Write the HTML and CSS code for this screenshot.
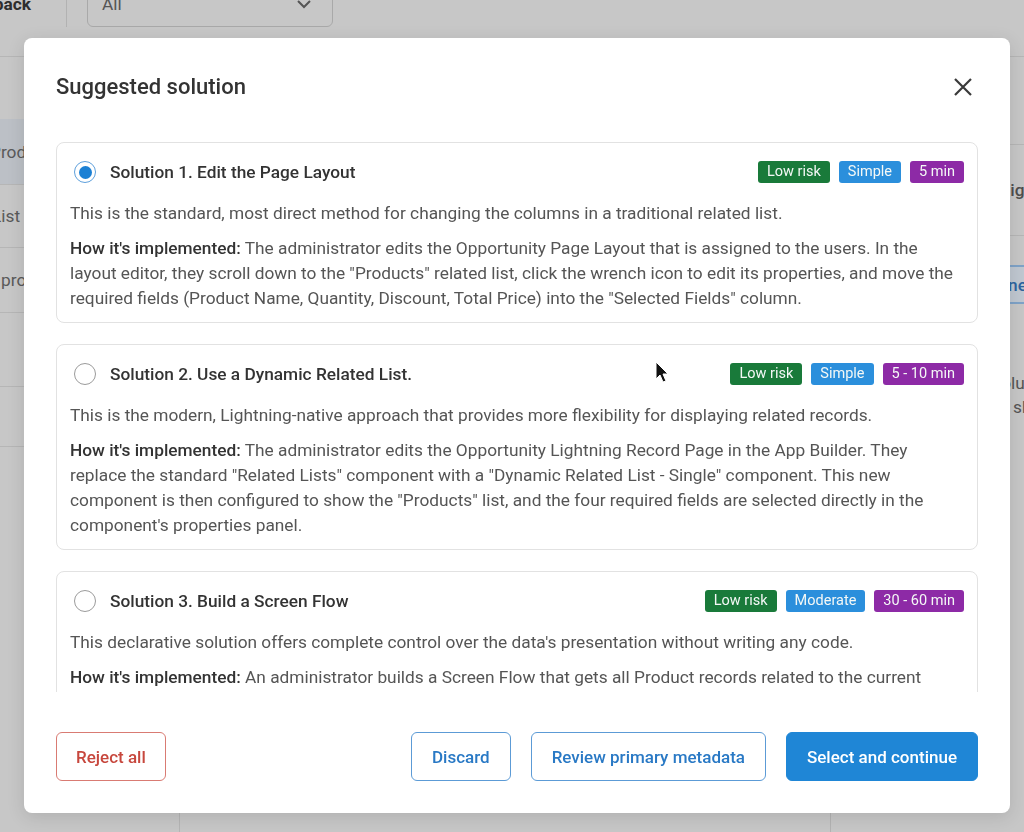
FILE: index.html
```html
<!DOCTYPE html>
<html lang="en">
<head>
	<meta charset="UTF-8">
	<title>Suggested solution</title>
	<link rel="stylesheet" href="styles.css">
</head>
<body>
	<div class="page">
		<div class="topbar">
			<div class="topbar-row">
				<span class="topbar-title">Feedback</span>
				<span class="divider"></span>
				<div class="select">
					<span>All</span>
					<svg width="16" height="10" viewBox="0 0 16 10"><path d="M2 2l6 6 6-6" fill="none" stroke="#555" stroke-width="2"/></svg>
				</div>
			</div>
		</div>
		<div class="page-body">
			<ul class="side-left">
				<li class="row-a"></li>
				<li class="row-b"></li>
				<li class="row-c active"><span class="cut">Products</span></li>
				<li class="row-c"><span class="cut-l">List view</span></li>
				<li class="row-d">products</li>
				<li class="row-e"></li>
				<li class="row-f"></li>
			</ul>
			<div class="main"></div>
			<div class="side-right">
				<div class="r-row r-a"></div>
				<div class="r-row r-b"></div>
				<div class="r-row r-c"><span class="r-text">Highlights</span></div>
				<div class="r-box"><span class="r-link">Done</span></div>
				<div class="r-notes">
					<p>Solutions</p>
					<p>should</p>
				</div>
			</div>
		</div>
	</div>

	<div class="backdrop">
		<div class="modal">
			<div class="modal-head">
				<h2>Suggested solution</h2>
				<svg class="close" width="18" height="18" viewBox="0 0 18 18"><path d="M1 1l16 16M17 1L1 17" stroke="#3a3a3a" stroke-width="2.2"/></svg>
			</div>

			<div class="modal-body">
				<div class="card">
					<div class="card-head">
						<span class="radio on"></span>
						<span class="card-title">Solution 1. Edit the Page Layout</span>
						<div class="tags">
							<span class="tag green">Low risk</span>
							<span class="tag blue">Simple</span>
							<span class="tag purple">5 min</span>
						</div>
					</div>
					<p class="desc">This is the standard, most direct method for changing the columns in a traditional related list.</p>
					<p class="how"><b>How it's implemented:</b> The administrator edits the Opportunity Page Layout that is assigned to the users. In the layout editor, they scroll down to the "Products" related list, click the wrench icon to edit its properties, and move the required fields (Product Name, Quantity, Discount, Total Price) into the "Selected Fields" column.</p>
				</div>

				<div class="card">
					<div class="card-head">
						<span class="radio"></span>
						<span class="card-title">Solution 2. Use a Dynamic Related List.</span>
						<div class="tags">
							<span class="tag green">Low risk</span>
							<span class="tag blue">Simple</span>
							<span class="tag purple">5 - 10 min</span>
						</div>
					</div>
					<p class="desc">This is the modern, Lightning-native approach that provides more flexibility for displaying related records.</p>
					<p class="how"><b>How it's implemented:</b> The administrator edits the Opportunity Lightning Record Page in the App Builder. They replace the standard "Related Lists" component with a "Dynamic Related List - Single" component. This new component is then configured to show the "Products" list, and the four required fields are selected directly in the component's properties panel.</p>
				</div>

				<div class="card">
					<div class="card-head">
						<span class="radio"></span>
						<span class="card-title">Solution 3. Build a Screen Flow</span>
						<div class="tags">
							<span class="tag green">Low risk</span>
							<span class="tag blue">Moderate</span>
							<span class="tag purple">30 - 60 min</span>
						</div>
					</div>
					<p class="desc">This declarative solution offers complete control over the data's presentation without writing any code.</p>
					<p class="how"><b>How it's implemented:</b> An administrator builds a Screen Flow that gets all Product records related to the current Opportunity and shows them in a Data Table component. The flow is then added to the Opportunity Lightning Record Page.</p>
				</div>
			</div>

			<div class="modal-foot">
				<button class="btn danger">Reject all</button>
				<div class="btn-group">
					<button class="btn outline">Discard</button>
					<button class="btn outline">Review primary metadata</button>
					<button class="btn primary">Select and continue</button>
				</div>
			</div>
		</div>
	</div>

	<svg class="cursor" width="14" height="22" viewBox="0 0 14 22"><path d="M1 1v17l4-4 3 7 3-1-3-7h5z" fill="#111" stroke="#fff" stroke-width="1"/></svg>
</body>
</html>
```

FILE: styles.css
```css
*{margin: 0;padding: 0;box-sizing: border-box;}
body{
	background: #c7c7c7;
	font-family: Roboto, "Liberation Sans", sans-serif;
	font-size: 17.3px;
	color: #555;
	overflow: hidden;
	height: 832px;
}
li{list-style: none;}

/* page under the overlay */
.page{height: 832px;display: flex;flex-direction: column;}
.topbar{height: 38px;overflow: hidden;flex: none;}
.topbar-row{
	display: flex;align-items: center;
	height: 47px;margin: -20px 0 0 -44px;
}
.topbar-title{font-weight: 700;color: #2e2e2e;}
.divider{width: 1px;height: 47px;background: #b2b2b2;margin: 0 20px 0 35px;}
.select{
	width: 246px;height: 47px;
	border: 1px solid #a9a9a9;border-radius: 6px;
	display: flex;align-items: center;justify-content: space-between;
	padding: 0 20px 0 14px;color: #555;
}
.page-body{flex: 1;display: grid;grid-template-columns: 180px 1fr 194px;}
.side-left{border-right: 1px solid #b5b5b5;}
.side-left li{border-bottom: 1px solid #b6b6b6;display: flex;align-items: center;color: #5a5a5a;white-space: nowrap;overflow: hidden;}
.row-a{height: 19px;}
.row-b{height: 62px;border-bottom: 0 !important;}
.row-c{height: 66px;}
.side-left li.row-c:nth-child(4){height: 63px;}
.row-d{height: 65px;padding-left: 1px;}
.row-e{height: 74px;}
.row-f{height: 60px;}
.active{background: #bcc0c6;}
.cut{margin-left: -10px;}
.cut-l{margin-left: -8px;}
.side-right{border-left: 1px solid #b3b3b3;}
.r-row{border-bottom: 1px solid #b6b6b6;}
.r-a{height: 19px;}
.r-b{height: 88px;}
.r-c{height: 91px;display: flex;align-items: center;padding-left: 167px;color: #4e4e4e;font-weight: 500;white-space: nowrap;overflow: hidden;}
.r-box{
	height: 39px;margin-top: 29px;
	border-top: 2px solid #7fa3c8;border-bottom: 2px solid #7fa3c8;
	background: #c0c8d1;
	display: flex;align-items: center;padding-left: 156px;
	color: #2d65a0;font-weight: 500;
}
.r-notes{padding: 67px 0 0 160px;line-height: 24px;color: #555;white-space: nowrap;overflow: hidden;}
.r-notes p:last-child{padding-left: 22px;}

/* overlay + modal */
.backdrop{
	position: fixed;top: 0;left: 0;right: 0;bottom: 0;
	padding: 38px 14px 19px 24px;
	display: flex;
}
.modal{
	flex: 1;background: #fff;border-radius: 8px;
	box-shadow: 0 4px 18px rgba(0,0,0,.12);
	display: flex;flex-direction: column;
}
.modal-head{
	display: flex;align-items: center;justify-content: space-between;
	padding: 35px 38px 0 32px;
}
.modal-head h2{font-size: 22px;line-height: 28px;font-weight: 500;color: #333;}
.modal-body{
	margin-top: 41px;height: 550px;overflow: hidden;
	padding: 0 32px;
	display: flex;flex-direction: column;gap: 21px;
}
.card{
	border: 1px solid #e2e2e2;border-radius: 8px;
	padding: 18px 13px 11px;flex: none;
}
.card-head{display: flex;align-items: center;height: 22px;}
.radio{
	width: 22px;height: 22px;border-radius: 50%;
	border: 1.5px solid #9b9b9b;margin: 0 14px 0 4px;
	display: flex;align-items: center;justify-content: center;flex: none;
}
.radio.on{border: 1.5px solid #5ea0dc;}
.radio.on::after{content: "";width: 13px;height: 13px;border-radius: 50%;background: #1b80d4;}
.card-title{font-weight: 500;color: #333;flex: 1;}
.tags{display: flex;gap: 9px;}
.tag{
	height: 22px;line-height: 22px;padding: 0 9px;
	border-radius: 3px;font-size: 14.5px;color: #f4f8f6;
}
.green{background: #197a3a;}
.blue{background: #2b8fdc;}
.purple{background: #8d2aa6;}
.desc{margin-top: 18px;line-height: 25px;}
.how{margin-top: 10px;line-height: 25px;}
.how b{font-weight: 500;color: #333;}

.modal-foot{
	display: flex;justify-content: space-between;
	padding: 40px 32px 32px;
}
.btn-group{display: flex;gap: 20px;}
.btn{
	height: 49px;padding: 0 20px;border-radius: 6px;
	font-family: inherit;font-size: 17px;font-weight: 500;
	background: #fff;cursor: pointer;
}
.danger{border: 1px solid #d97b73;color: #c7473d;padding: 0 19px;}
.outline{border: 1px solid #5c9bd6;color: #2979c5;}
.primary{border: 1px solid #1f86d6;background: #1f86d6;color: #fff;}

.cursor{position: fixed;left: 655px;top: 361px;}
```
